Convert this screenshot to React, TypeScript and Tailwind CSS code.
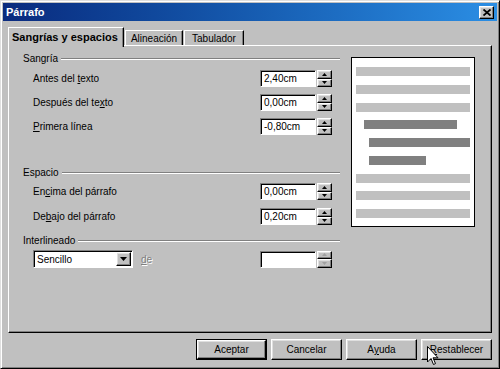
import React from "react";

const bevelOut =
  "bg-[#c0c0c0] border border-t-white border-l-white border-r-black border-b-black shadow-[inset_-1px_-1px_#808080,inset_1px_1px_#dfdfdf]";
const sunken =
  "bg-white border border-t-[#808080] border-l-[#808080] border-r-white border-b-white shadow-[inset_1px_1px_#000]";

function Spin({ disabled = false }: { disabled?: boolean }) {
  const fill = disabled ? "#a0a0a0" : "#000";
  return (
    <div className="flex flex-col w-[15px] h-[17px]">
      <div className={`${bevelOut} flex-1 flex items-center justify-center`}>
        <svg width="5" height="3" viewBox="0 0 5 3">
          <path d="M2.5 0 L5 3 L0 3 Z" fill={fill} />
        </svg>
      </div>
      <div className={`${bevelOut} flex-1 flex items-center justify-center`}>
        <svg width="5" height="3" viewBox="0 0 5 3">
          <path d="M0 0 L5 0 L2.5 3 Z" fill={fill} />
        </svg>
      </div>
    </div>
  );
}

function Field({ value = "", disabled = false }: { value?: string; disabled?: boolean }) {
  return (
    <div className="flex items-center gap-[1px]">
      <div className={`${sunken} w-[56px] h-[17px] pl-[3px] flex items-center text-[10px] text-black`}>
        {value}
      </div>
      <Spin disabled={disabled} />
    </div>
  );
}

function GroupHeader({ label }: { label: string }) {
  return (
    <div className="flex items-center gap-[3px] h-[13px]">
      <span className="text-[10px] leading-[13px] text-black">{label}</span>
      <div className="flex-1 h-[2px] border-t border-t-[#808080] border-b border-b-white" />
    </div>
  );
}

function Row({ label, value }: { label: React.ReactNode; value: string }) {
  return (
    <div className="flex items-center h-[17px]">
      <div className="w-[237px] pl-[10px] text-[10px] text-black">{label}</div>
      <Field value={value} />
    </div>
  );
}

function Btn({ children, def = false }: { children: React.ReactNode; def?: boolean }) {
  return (
    <div className={`w-[71px] h-[21px] ${def ? "border border-black" : ""}`}>
      <div className={`${bevelOut} w-full h-full flex items-center justify-center text-[10px] text-black`}>
        {children}
      </div>
    </div>
  );
}

export default function App() {
  const light = "h-[9px] w-[114px] bg-[#c0c0c0]";
  return (
    <div
      className="relative w-[500px] h-[369px] bg-[#c0c0c0] border border-t-[#dfdfdf] border-l-[#dfdfdf] border-r-black border-b-black shadow-[inset_1px_1px_#fff,inset_-1px_-1px_#808080] p-[2px] flex flex-col"
      style={{ fontFamily: '"Liberation Sans", Arial, sans-serif' }}
    >
      {/* Title bar */}
      <div className="h-[18px] flex items-center bg-gradient-to-r from-[#0a2a7e] to-[#2b8ee4]">
        <span className="pl-[3px] text-[11px] font-bold text-white">Párrafo</span>
        <div className={`${bevelOut} ml-auto mr-[3px] w-[15px] h-[13px] flex items-center justify-center`}>
          <svg width="8" height="7" viewBox="0 0 8 7">
            <path d="M0.5 0.5 L7.5 6.5 M7.5 0.5 L0.5 6.5" stroke="#000" strokeWidth="1.8" />
          </svg>
        </div>
      </div>

      {/* Tabs */}
      <div className="mt-[6px] px-[5px] flex items-end h-[18px]">
        <div className="relative z-10 -mb-[2px] w-[116px] h-[20px] bg-[#c0c0c0] border-t border-l border-t-white border-l-white border-r border-r-black shadow-[inset_-1px_0_#808080] pl-[3px] flex items-center text-[11px] font-bold text-black">
          Sangrías y espacios
        </div>
        <div className="ml-[1px] w-[58px] h-[15px] border-t border-l border-t-white border-l-white border-r border-r-black shadow-[inset_-1px_0_#808080] flex items-center justify-center text-[10px] text-black">
          Alineación
        </div>
        <div className="ml-[1px] w-[60px] h-[15px] border-t border-l border-t-white border-l-white border-r border-r-black shadow-[inset_-1px_0_#808080] flex items-center justify-center text-[10px] text-black">
          Tabulador
        </div>
      </div>

      {/* Panel */}
      <div className="mx-[5px] h-[288px] border border-t-white border-l-white border-r-black border-b-black shadow-[inset_-1px_-1px_#808080] pl-[14px] pt-[6px] flex items-start gap-[11px]">
        <div className="w-[317px] flex flex-col">
          <GroupHeader label="Sangría" />
          <div className="mt-[5px] flex flex-col gap-[7px]">
            <Row label={<>Antes del <u>t</u>exto</>} value="2,40cm" />
            <Row label={<>Después del te<u>x</u>to</>} value="0,00cm" />
            <Row label={<><u>P</u>rimera línea</>} value="-0,80cm" />
          </div>

          <div className="mt-[31px]">
            <GroupHeader label="Espacio" />
          </div>
          <div className="mt-[4px] flex flex-col gap-[8px]">
            <Row label={<>En<u>c</u>ima del párrafo</>} value="0,00cm" />
            <Row label={<>De<u>b</u>ajo del párrafo</>} value="0,20cm" />
          </div>

          <div className="mt-[9px]">
            <GroupHeader label="Interlineado" />
          </div>
          <div className="mt-[2px] flex items-center h-[20px]">
            <div className="w-[237px] pl-[10px] flex items-center">
              <div className={`${sunken} w-[100px] h-[18px] flex items-center pl-[3px] pr-[1px]`}>
                <span className="flex-1 text-[10px] text-black">Sencillo</span>
                <div className={`${bevelOut} w-[15px] h-[14px] flex items-center justify-center`}>
                  <svg width="7" height="4" viewBox="0 0 7 4">
                    <path d="M0 0 L7 0 L3.5 4 Z" fill="#000" />
                  </svg>
                </div>
              </div>
              <span className="ml-[8px] text-[10px] text-[#808080] [text-shadow:1px_1px_#fff]">
                <u>d</u>e
              </span>
            </div>
            <Field disabled />
          </div>
        </div>

        {/* Preview */}
        <div className="mt-[5px] w-[124px] h-[170px] bg-white border border-black pl-[4px] pt-[9px] flex flex-col gap-[8.75px]">
          <div className={light} />
          <div className={light} />
          <div className={light} />
          <div className="h-[9px] ml-[8px] w-[93px] bg-[#808080]" />
          <div className="h-[9px] ml-[13px] w-[101px] bg-[#808080]" />
          <div className="h-[9px] ml-[13px] w-[57px] bg-[#808080]" />
          <div className={light} />
          <div className={light} />
          <div className={light} />
        </div>
      </div>

      {/* Buttons */}
      <div className="mt-[6px] pr-[5px] flex justify-end gap-[4px]">
        <Btn def>Aceptar</Btn>
        <Btn>Cancelar</Btn>
        <Btn>A<u>y</u>uda</Btn>
        <Btn><u>R</u>establecer</Btn>
      </div>

      {/* Mouse cursor */}
      <svg className="absolute left-[426px] top-[345px]" width="12" height="20" viewBox="0 0 12 20">
        <path
          d="M0.5 0.5 L0.5 16 L4 12.5 L6.5 18.5 L8.5 17.6 L6 11.8 L11 11.8 Z"
          fill="#fff"
          stroke="#000"
          strokeWidth="1"
        />
      </svg>
    </div>
  );
}
